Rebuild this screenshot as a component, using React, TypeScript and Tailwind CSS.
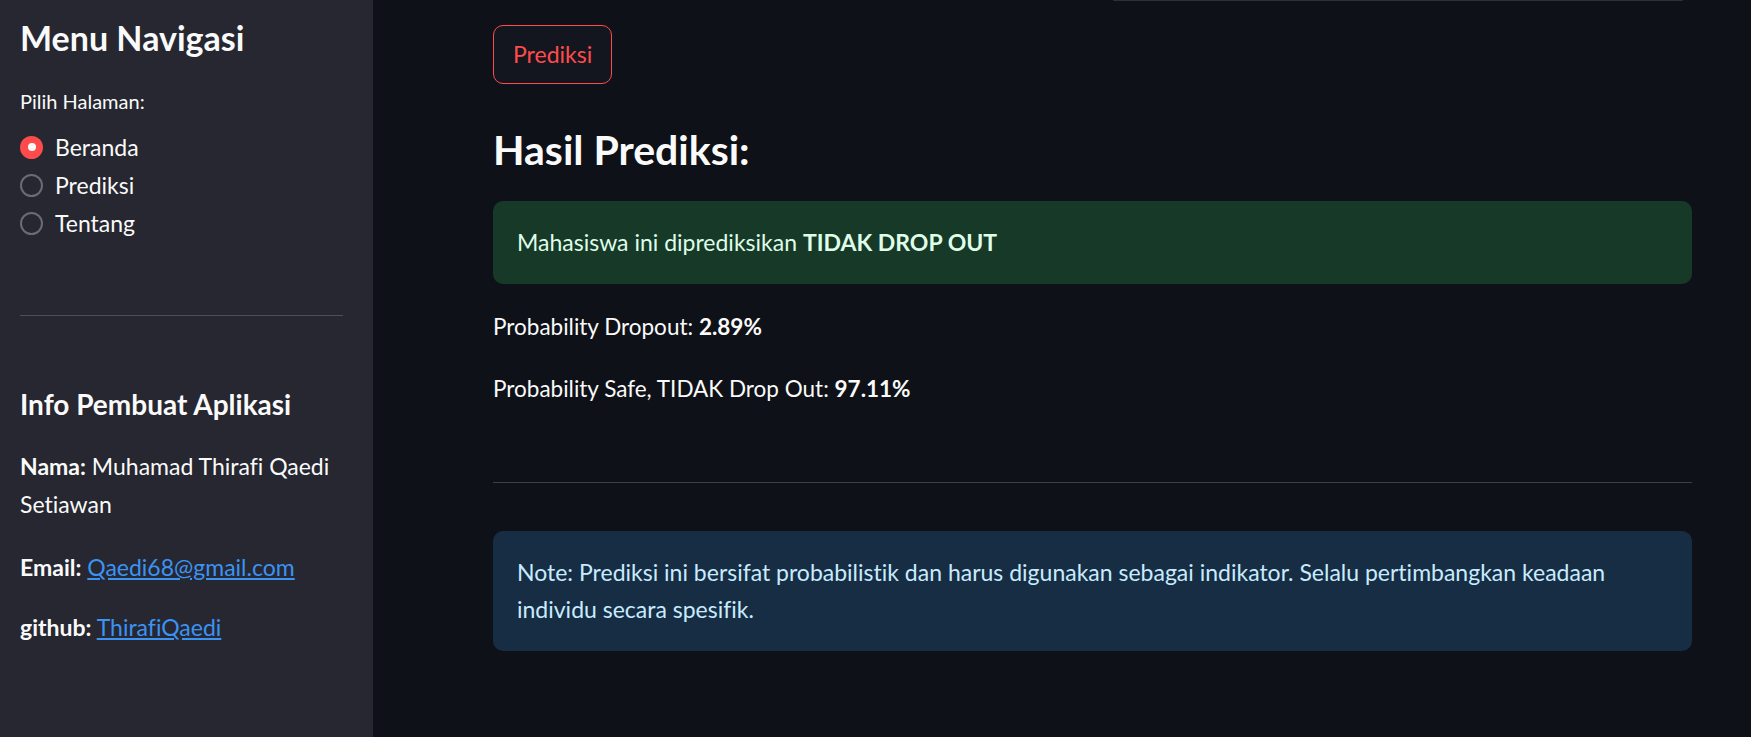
const pages = ["Beranda", "Prediksi", "Tentang"]

function Radio({ label, checked }: { label: string; checked?: boolean }) {
  return (
    <div className="flex h-[38px] items-center gap-3">
      {checked ? (
        <span className="flex h-[23px] w-[23px] items-center justify-center rounded-full bg-[#ff4b4b]">
          <span className="h-[8px] w-[8px] rounded-full bg-[#fafafa]" />
        </span>
      ) : (
        <span className="h-[23px] w-[23px] rounded-full border-2 border-[#6b6c73]" />
      )}
      <span className="text-[23px] leading-[38px]">{label}</span>
    </div>
  )
}

export default function App() {
  return (
    <div className="flex min-h-[737px] w-full font-['Lato',sans-serif] text-[#fafafa] [font-variant-ligatures:none]">
      <aside className="w-[373px] shrink-0 bg-[#262730] pl-5 pr-[30px] pt-[17px]">
        <h2 className="text-[34px] font-bold leading-[42px]">Menu Navigasi</h2>
        <p className="mt-[27px] text-[20px] leading-[30px]">Pilih Halaman:</p>
        <div className="mt-3">
          {pages.map((p, i) => (
            <Radio key={p} label={p} checked={i === 0} />
          ))}
        </div>
        <hr className="mt-[73px] border-0 border-t border-[#4e4f57]" />
        <h3 className="mt-[71px] text-[28px] font-bold leading-[34px]">Info Pembuat Aplikasi</h3>
        <div className="text-[23px] leading-[38px]">
          <p className="mt-[26px]">
            <b>Nama:</b> Muhamad Thirafi Qaedi Setiawan
          </p>
          <p className="mt-[25px]">
            <b>Email:</b>{" "}
            <a href="#" className="text-[#3b93f3] underline">
              Qaedi68@gmail.com
            </a>
          </p>
          <p className="mt-[22px]">
            <b>github:</b>{" "}
            <a href="#" className="text-[#3b93f3] underline">
              ThirafiQaedi
            </a>
          </p>
        </div>
      </aside>

      <main className="flex-1 bg-[#0e1117] pl-[120px] pr-[59px]">
        <div className="ml-[620px] h-px w-[570px] rounded-b bg-[#2e3139]" />
        <button className="mt-6 h-[59px] rounded-[10px] border border-[#ff4b4b] bg-[#13161e] px-[19px] text-[23px] text-[#ff4b4b]">
          Prediksi
        </button>
        <h3 className="mt-[41px] text-[41px] font-bold leading-[49px]">Hasil Prediksi:</h3>
        <div className="mt-[27px] rounded-[10px] bg-[#173928] px-6 py-[23px] text-[23px] leading-[37px] text-[#dffde9]">
          Mahasiswa ini diprediksikan <b>TIDAK DROP OUT</b>
        </div>
        <div className="text-[22.5px] leading-[38px]">
          <p className="mt-6">
            Probability Dropout: <b>2.89%</b>
          </p>
          <p className="mt-6">
            Probability Safe, TIDAK Drop Out: <b>97.11%</b>
          </p>
        </div>
        <hr className="mt-[74px] border-0 border-t border-[#3d3f45]" />
        <div className="mt-[48px] rounded-[10px] bg-[#172d43] px-6 py-[23px] text-[23px] leading-[37px] text-[#c7ebff]">
          Note: Prediksi ini bersifat probabilistik dan harus digunakan sebagai indikator. Selalu pertimbangkan keadaan
          individu secara spesifik.
        </div>
      </main>
    </div>
  )
}
